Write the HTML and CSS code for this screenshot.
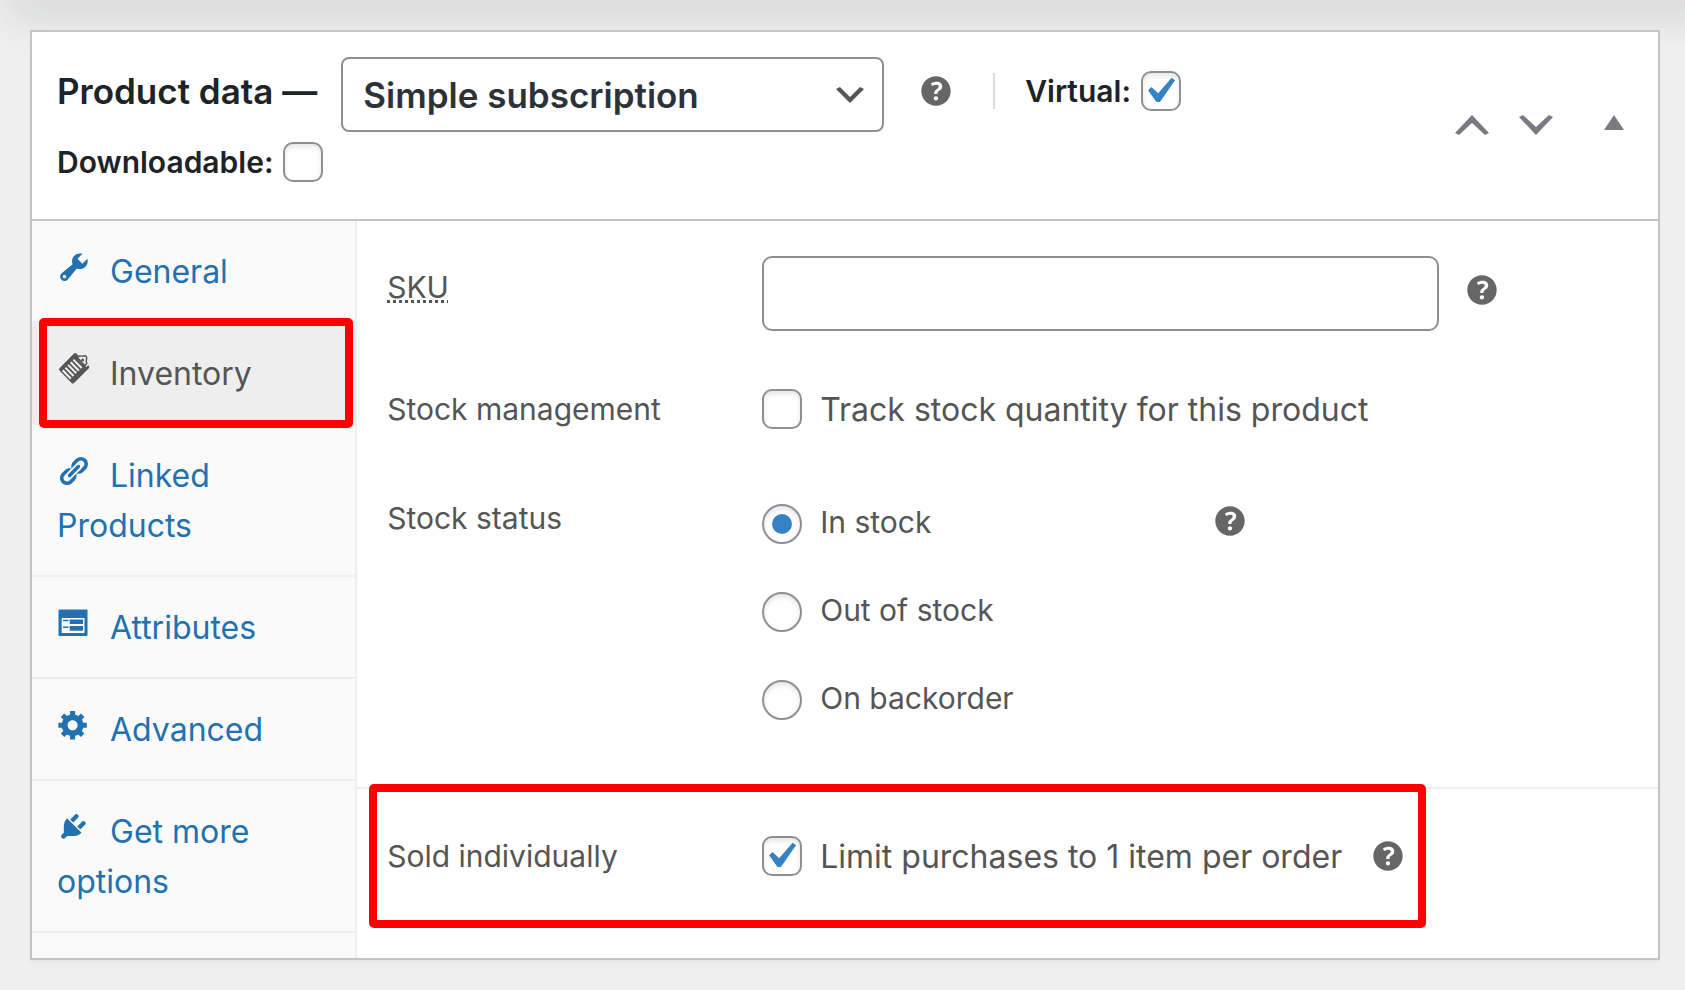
FILE: index.html
```
<!DOCTYPE html>
<html lang="en">
<head>
    <meta charset="UTF-8">
    <meta name="viewport" content="width=device-width, initial-scale=1.0">
    <title>Product data - Inventory</title>
    <link rel="stylesheet" href="styles.css">
</head>
<body>
    <svg class="sprite" aria-hidden="true">
        <symbol id="icon-help" viewBox="0 0 20 20">
            <path fill="currentColor" d="M17 10c0-3.870-3.140-7-7-7-3.870 0-7 3.130-7 7s3.130 7 7 7c3.860 0 7-3.130 7-7zM10.700 11.480h-1.560v-0.430c0-0.380 0.080-0.700 0.240-0.980s0.460-0.570 0.880-0.890c0.410-0.290 0.680-0.530 0.810-0.710 0.140-0.180 0.200-0.390 0.200-0.620 0-0.250-0.090-0.440-0.280-0.580-0.190-0.130-0.450-0.190-0.790-0.190-0.580 0-1.250 0.190-2 0.570l-0.640-1.280c0.870-0.490 1.800-0.740 2.770-0.740 0.810 0 1.450 0.200 1.920 0.580 0.480 0.390 0.710 0.910 0.710 1.550 0 0.430-0.090 0.800-0.290 1.110-0.190 0.320-0.570 0.670-1.110 1.060-0.380 0.280-0.610 0.490-0.710 0.630-0.100 0.150-0.150 0.340-0.150 0.570v0.350zM9.230 14.220c-0.180-0.170-0.270-0.420-0.270-0.730 0-0.330 0.080-0.580 0.260-0.750s0.430-0.250 0.770-0.250c0.320 0 0.570 0.090 0.750 0.260s0.270 0.420 0.270 0.740c0 0.300-0.090 0.550-0.270 0.720-0.180 0.180-0.430 0.270-0.750 0.270-0.330 0-0.580-0.090-0.760-0.260z"/>
        </symbol>
    </svg>

    <div class="topbar-shadow"></div>

    <div class="postbox">
        <div class="postbox-header">
            <div class="product-type">
                <div class="type-row">
                    <h2 class="title">Product data —</h2>
                    <select class="type-select" aria-label="Product type">
                        <option selected>Simple subscription</option>
                        <option>Simple product</option>
                        <option>Variable product</option>
                    </select>
                    <svg class="help-tip"><use href="#icon-help"/></svg>
                    <label class="type-option virtual">Virtual: <input class="checkbox" type="checkbox" checked></label>
                </div>
                <label class="type-option downloadable">Downloadable: <input class="checkbox" type="checkbox"></label>
            </div>
            <div class="handle-actions">
                <button class="handle" aria-label="Move up"><svg width="34" height="20" viewBox="0 0 34 20"><path d="M0 18L17 0l17 18-4 2L17 8 4 20z"/></svg></button>
                <button class="handle" aria-label="Move down"><svg width="34" height="20" viewBox="0 0 34 20"><path d="M0 2L4 0l13 12L30 0l4 2-17 18z"/></svg></button>
                <button class="handle toggle" aria-label="Toggle panel"><svg width="20" height="20" viewBox="0 0 20 20"><path d="M10 0l10 15H0z"/></svg></button>
            </div>
        </div>

        <div class="panel-wrap">
            <ul class="tabs">
                <li><a href="#general"><svg class="tab-icon" viewBox="0.2 1.8 17.4 17.4"><path d="M16.680 9.770c-1.340 1.340-3.300 1.670-4.950 0.990l-5.410 6.520c-0.990 0.990-2.590 0.990-3.580 0s-0.990-2.590 0-3.570l6.520-5.420c-0.680-1.650-0.350-3.610 0.990-4.950 1.280-1.280 3.120-1.620 4.720-1.060l-2.890 2.890 2.820 2.820 2.860-2.870c0.530 1.580 0.180 3.390-1.080 4.650zM3.810 16.210c0.400 0.390 1.040 0.390 1.430 0 0.400-0.400 0.400-1.040 0-1.430-0.390-0.400-1.030-0.400-1.430 0-0.390 0.390-0.390 1.030 0 1.430z"/></svg>General</a></li>
                <li class="active"><a href="#inventory"><svg class="tab-icon" viewBox="0 0 30 30">
                    <path d="M2.500 13.300L17 -1.500q1.200-1 2.400 0l2 2 1.500 6 6 5.500 2.400-1.500.6.600q1 1.100 0 2.200L17 28q-1.200 1-2.400 0L2.500 15.500q-1-1.100 0-2.200z"/>
                    <path class="stripes" d="M5.700 15.300l8.200 8.400M8.400 12.600l8.200 8.400M11.100 9.900l8.200 8.400M13.700 7.300l8.200 8.400M16.400 4.600l8.200 8.400"/>
                    <path class="clip" d="M20.600 2.600L22.500 1q2.600.4 5.600-.2 1.500.2 1.600 1.700-.7 3.200 0 6l-1.700 2.300z"/>
                    <circle cx="25.600" cy="4.900" r="1.500"/>
                </svg>Inventory</a></li>
                <li><a href="#linked"><svg class="tab-icon" viewBox="0.2 1.5 18.2 18.2"><path d="M17.740 2.760c1.680 1.690 1.680 4.410 0 6.100l-1.530 1.520c-1.120 1.120-2.700 1.470-4.140 1.090l2.620-2.610 0.760-0.770 0.760-0.760c0.840-0.840 0.840-2.200 0-3.040-0.840-0.850-2.200-0.850-3.040 0l-0.770 0.760-3.380 3.380c-0.370-1.440-0.020-3.020 1.100-4.140l1.520-1.530c1.690-1.680 4.420-1.680 6.100 0zM8.590 13.430l5.340-5.340c0.420-0.420 0.420-1.100 0-1.520-0.440-0.430-1.130-0.390-1.530 0l-5.330 5.340c-0.420 0.420-0.420 1.100 0 1.520 0.440 0.430 1.130 0.390 1.520 0zM7.830 15.720l4.140-4.150c0.380 1.440 0.030 3.020-1.090 4.140l-1.520 1.530c-1.690 1.680-4.410 1.680-6.100 0-1.680-1.680-1.680-4.420 0-6.100l1.530-1.520c1.120-1.120 2.700-1.470 4.140-1.100l-4.140 4.150c-0.850 0.840-0.850 2.200 0 3.050 0.840 0.840 2.200 0.840 3.040 0z"/></svg>Linked Products</a></li>
                <li><a href="#attributes"><svg class="tab-icon" viewBox="0 0 30 30"><path fill-rule="evenodd" d="M2.500 0.500h27q1 0 1 1v24.500q0 1-1 1h-27q-1 0-1-1v-24.500q0-1 1-1zM4.700 9v15h22.800v-15zM12.700 10.500h13.300v4.500h-13.300zM12.700 17h13.300v4.700h-13.300zM6 10.800h5.500v1.500h-5.500zM6 17.500h5.500v1.500h-5.500z"/></svg>Attributes</a></li>
                <li><a href="#advanced"><svg class="tab-icon" viewBox="0.2 2 17.900 17.900"><path d="M18 12h-2.180c-0.170 0.700-0.440 1.350-0.810 1.930l1.540 1.540-2.100 2.100-1.540-1.540c-0.580 0.360-1.230 0.630-1.910 0.790v2.180h-3v-2.180c-0.680-0.160-1.330-0.430-1.910-0.790l-1.540 1.540-2.120-2.120 1.540-1.540c-0.360-0.580-0.630-1.230-0.790-1.910h-2.180v-2.970h2.170c0.160-0.700 0.440-1.350 0.800-1.940l-1.540-1.540 2.100-2.100 1.540 1.540c0.590-0.370 1.240-0.640 1.940-0.810v-2.180h3v2.180c0.680 0.160 1.330 0.430 1.910 0.790l1.540-1.540 2.120 2.120-1.540 1.540c0.360 0.590 0.640 1.240 0.800 1.940h2.170v2.970zM9.500 13.500c1.660 0 3-1.340 3-3s-1.340-3-3-3-3 1.340-3 3 1.340 3 3 3z"/></svg>Advanced</a></li>
                <li><a href="#options"><svg class="tab-icon" viewBox="-0.2 1.7 18.600 18.600"><path d="M13.110 4.360L9.870 7.600 8 5.730l3.240-3.240c.35-.34 1.050-.2 1.560.32.52.51.66 1.210.31 1.550zm-8 1.770l.91-1.120 9.010 9.010-1.190.84c-.71.71-2.630 1.160-3.820 1.160H6.140L4.900 17.260c-.59.59-1.540.59-2.120 0-.59-.58-.59-1.530 0-2.120l1.240-1.240v-3.880c0-1.130.4-3.190 1.090-3.890zm7.260 3.970l3.240-3.240c.34-.35 1.040-.21 1.550.31.52.51.66 1.210.31 1.550l-3.240 3.250z"/></svg>Get more options</a></li>
            </ul>

            <div class="panel" id="inventory">
                <div class="field-group">
                    <div class="field">
                        <label class="field-label" for="sku"><abbr title="Stock Keeping Unit">SKU</abbr></label>
                        <input class="text-input" id="sku" type="text">
                        <svg class="help-tip"><use href="#icon-help"/></svg>
                    </div>
                    <div class="field inline">
                        <label class="field-label" for="manage">Stock management</label>
                        <input class="checkbox" id="manage" type="checkbox">
                        <label class="description" for="manage">Track stock quantity for this product</label>
                    </div>
                    <div class="field" role="radiogroup" aria-labelledby="status-label">
                        <span class="field-label" id="status-label">Stock status</span>
                        <div class="radios">
                            <label class="radio-label"><input class="radio" type="radio" name="status" checked>In stock</label>
                            <label class="radio-label"><input class="radio" type="radio" name="status">Out of stock</label>
                            <label class="radio-label"><input class="radio" type="radio" name="status">On backorder</label>
                        </div>
                        <svg class="help-tip"><use href="#icon-help"/></svg>
                    </div>
                </div>
                <div class="field-group">
                    <div class="field inline highlighted">
                        <label class="field-label" for="sold">Sold individually</label>
                        <input class="checkbox" id="sold" type="checkbox" checked>
                        <label class="description" for="sold">Limit purchases to 1 item per order</label>
                        <svg class="help-tip"><use href="#icon-help"/></svg>
                    </div>
                </div>
            </div>
        </div>
    </div>
</body>
</html>
```
FILE: styles.css
```
* {
    margin: 0;
    padding: 0;
    box-sizing: border-box;
}

body {
    font-family: Inter, "Liberation Sans", sans-serif;
    font-size: 30px;
    color: #555;
    background: #efefef;
}

.sprite {
    display: none;
}

/* shadow cast by the bar above the page */
.topbar-shadow {
    height: 0;
    box-shadow: 20px 0 40px 12px rgba(30, 35, 45, 0.18);
}

.postbox {
    position: relative;
    margin: 30px 25px 30px 30px;
    background: #fff;
    border: 2px solid #c3c4c7;
    box-shadow: 0 2px 2px rgba(0, 0, 0, 0.04);
}

.postbox-header {
    display: flex;
    justify-content: space-between;
    align-items: center;
    padding: 25px 34px 27px 25px;
    border-bottom: 2px solid #c3c4c7;
    color: #1d2327;
}

.type-row {
    display: flex;
    align-items: flex-start;
}

.title {
    margin-right: 24px;
    font-size: 35px;
    font-weight: 600;
    line-height: 68px;
    white-space: nowrap;
}

.type-select {
    appearance: none;
    width: 543px;
    height: 75px;
    padding: 0 60px 0 20px;
    border: 2px solid #8c8f94;
    border-radius: 8px;
    background: #fff url('data:image/svg+xml;utf8,<svg xmlns="http://www.w3.org/2000/svg" viewBox="0 0 20 20"><path d="M5 6l5 5 5-5 2 1-7 7-7-7 2-1z" fill="%23555"/></svg>') no-repeat right 12px center / 40px 40px;
    font-family: inherit;
    font-size: 35px;
    font-weight: 600;
    color: #2c3338;
}

.type-option {
    display: flex;
    align-items: center;
    gap: 10px;
    font-weight: 600;
}

.virtual {
    height: 36px;
    margin: 16px 0 0 36px;
    padding-left: 30px;
    border-left: 2px solid #dcdcde;
}

.downloadable {
    height: 60px;
}

.type-row .help-tip {
    margin-left: 31px;
}

.handle-actions {
    display: flex;
    gap: 30px;
}

.handle {
    border: none;
    background: none;
    color: #787c82;
    line-height: 0;
    cursor: pointer;
}

.handle svg {
    fill: currentColor;
}

.toggle {
    margin-left: 21px;
}

.checkbox,
.radio {
    appearance: none;
    flex: none;
    width: 40px;
    height: 40px;
    border: 2px solid #8c8f94;
    border-radius: 10px;
    background: #fff;
    box-shadow: inset 0 3px 5px rgba(0, 0, 0, 0.1);
}

.checkbox:checked {
    background: #fff url('data:image/svg+xml;utf8,<svg xmlns="http://www.w3.org/2000/svg" viewBox="0 0 20 20"><path d="M14.83 4.89l1.34.94-5.81 8.38H9.02L5.78 9.67l1.34-1.25 2.57 2.4z" fill="%233582c4"/></svg>') no-repeat -10px -8px / 52px 52px;
}

.radio {
    display: grid;
    place-items: center;
    border-radius: 50%;
}

.radio:checked::before {
    content: "";
    width: 20px;
    height: 20px;
    border-radius: 50%;
    background: #3582c4;
}

.help-tip {
    flex: none;
    width: 42px;
    height: 42px;
    margin-top: 13px;
    color: #666;
}

.panel-wrap {
    display: flex;
}

.tabs {
    flex: none;
    width: 20%;
    padding-bottom: 25px;
    border-right: 2px solid #eee;
    background: #fafafa;
    list-style: none;
}

.tabs li {
    position: relative;
}

.tabs a {
    display: block;
    padding: 26px 25px 24px;
    border-bottom: 2px solid #eee;
    font-size: 32px;
    line-height: 50px;
    color: #2271b1;
    text-decoration: none;
}

.tabs .active a {
    background: #eee;
    color: #555;
}

.tab-icon {
    width: 30px;
    height: 30px;
    margin-right: 23px;
    overflow: visible;
    fill: currentColor;
}

.tab-icon .stripes {
    fill: none;
    stroke: #eee;
    stroke-width: 2;
}

.tab-icon .clip {
    fill: #eee;
    stroke: currentColor;
    stroke-width: 1.4;
}

.panel {
    flex: 1;
}

.field-group {
    display: flex;
    flex-direction: column;
    gap: 47px;
    padding: 35px 30px 67px;
}

.field-group + .field-group {
    padding-top: 36px;
    padding-bottom: 0;
    border-top: 2px solid #eee;
}

.field {
    display: flex;
    align-items: flex-start;
}

.field.inline {
    align-items: center;
}

.field-label {
    flex: none;
    width: 375px;
    line-height: 62px;
}

.text-input {
    flex: 0 1 677px;
    height: 75px;
    margin-right: 22px;
    padding: 0 20px;
    border: 2px solid #8c8f94;
    border-radius: 10px;
    font: inherit;
}

.description {
    margin-left: 18px;
    font-size: 32px;
}

.radios {
    display: flex;
    flex-direction: column;
    gap: 48px;
    width: 36%;
    padding-top: 17px;
}

.radio-label {
    display: flex;
    gap: 18px;
    line-height: 36px;
}

.inline .help-tip {
    margin: 0 0 0 25px;
}

.highlighted {
    position: relative;
    width: fit-content;
}

/* red frames round the active tab and the limit option */
.active::after,
.highlighted::after {
    content: "";
    position: absolute;
    border: 8px solid #f00;
    border-radius: 5px;
    pointer-events: none;
}

.active::after {
    inset: -5px 2px -3px 7px;
}

.highlighted::after {
    inset: -41px -17px -41px -18px;
}
```
